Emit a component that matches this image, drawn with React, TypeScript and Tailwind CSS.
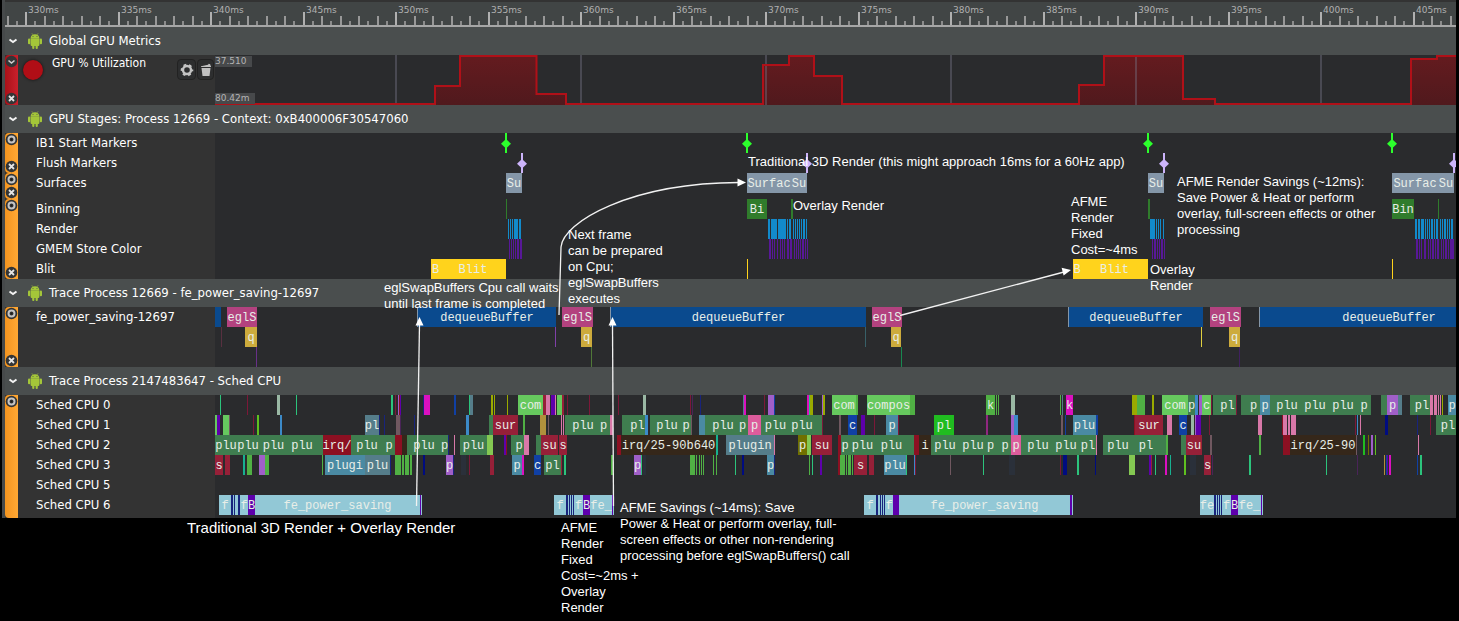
import React from "react";

/** [x, width, colour, label?] — x is measured from the left edge of the window. */
type Bar = [number, number, string, string?];

const TIMELINE_X = 215;

const PLUGIN = "#3f7d4f";
const LIGHT = "#66c95e";
const GREEN = "#50b044";
const VIVID = "#20bc20";
const LIME = "#60c020";
const MOSS = "#84c852";
const CRIMSON = "#962038";
const DARKRED = "#8c1022";
const WINE = "#7c1838";
const BROWN = "#35271a";
const TEAL = "#4a8aa3";
const SLATE = "#557d8a";
const VIOLET = "#5e00ac";
const DIMVIOLET = "#4a2458";
const PURPLE = "#a05fc8";
const PINK = "#d878a8";
const HOTPINK = "#dc5c9c";
const MAGENTA = "#dc10c0";
const NAVY = "#18247c";
const DEEP = "#000c80";
const ICE = "#92c8d6";
const BLUE = "#1040a4";
const OLIVE = "#9aaa00";
const SAGE = "#9ab8a4";
const EMERALD = "#2cc47c";
const JADE = "#18b090";
const AZURE = "#3c8ac8";
const SHADE = "#2a303a";
const GOLD = "#b0903c";
const MAUVE = "#705860";

const SURFACE = "#8496a8";
const BINNING = "#307c2c";
const RENDER = "#128acb";
const STORE = "#581898";
const BLIT = "#ffd31c";
const DEQUEUE = "#0a4a8e";
const SWAP = "#b3427f";
const QUEUE = "#cdab3c";

const line = (xs: number[], color: string): Bar[] => xs.map((x) => [x, 1, color] as Bar);
const wide = (xs: number[], color: string): Bar[] => xs.map((x) => [x, 2, color] as Bar);

const surfaces: Bar[] = [
  [506, 16, SURFACE, "Su"], [747, 44, SURFACE, "Surfac"], [791, 16, SURFACE, "Su"],
  [1148, 16, SURFACE, "Su"], [1392, 46, SURFACE, "Surfac"], [1438, 16, SURFACE, "Su"],
];

const binning: Bar[] = [
  [506, 1, BINNING], [747, 20, BINNING, "Bi"], [791, 2, BINNING],
  [1148, 2, BINNING], [1392, 22, BINNING, "Bin"], [1438, 1, BINNING],
];

const render: Bar[] = [
  ...line([508, 510, 512, 787, 793, 795, 797, 799, 801, 806, 1156, 1158, 1160, 1163, 1425, 1427, 1429, 1434, 1440, 1442, 1447, 1449], RENDER),
  ...wide([519, 768, 789, 803, 1415, 1418, 1431, 1436, 1444, 1451], RENDER),
  [514, 4, RENDER], [771, 6, RENDER], [778, 8, RENDER], [1150, 5, RENDER], [1421, 3, RENDER],
];

const store: Bar[] = [
  ...line([509, 511, 513, 515, 772, 774, 777, 780, 782, 784, 794, 796, 798, 800, 805, 807, 1152, 1157, 1159, 1164, 1419, 1421, 1428, 1430, 1435, 1441, 1443, 1448], STORE),
  ...wide([517, 520, 769, 787, 790, 802, 1154, 1161, 1416, 1424, 1432, 1437, 1445, 1450, 1452], STORE),
];

const blit: Bar[] = [
  [431, 9, BLIT, "B"], [440, 66, BLIT, "Blit"], [747, 1, BLIT],
  [1073, 8, BLIT, "B"], [1081, 67, BLIT, "Blit"], [1392, 1, BLIT],
];

const traceCalls: Bar[] = [
  [215, 6, DEQUEUE], [227, 30, SWAP, "eglS"],
  [417, 1, SURFACE], [418, 138, DEQUEUE, "dequeueBuffer"], [562, 31, SWAP, "eglS"],
  [610, 1, SURFACE], [611, 255, DEQUEUE, "dequeueBuffer"], [872, 30, SWAP, "eglS"],
  [1068, 1, SURFACE], [1069, 134, DEQUEUE, "dequeueBuffer"], [1210, 31, SWAP, "eglS"],
  [1259, 1, SURFACE], [1260, 258, DEQUEUE, "dequeueBuffer"],
];

const traceInner: Bar[] = [
  [221, 1, "#583040"], [245, 12, QUEUE, "q"], [555, 1, "#8040a8"], [581, 11, QUEUE, "q"],
  [865, 1, "#386068"], [891, 10, QUEUE, "q"], [1201, 1, "#e0d040"], [1229, 11, QUEUE, "q"],
];

const traceDeep: Bar[] = [
  [256, 1, "#683088"], [591, 1, "#507838"], [901, 1, "#188850"], [1239, 1, "#402060"],
];

const cpu0: Bar[] = [
  ...line([220, 296, 469, 809], EMERALD),
  ...line([247, 395, 567, 589, 618, 690, 764, 1211, 1236], WINE),
  [277, 3, SAGE], [391, 2, EMERALD], [398, 1, PURPLE], [399, 1, DARKRED], [400, 1, VIOLET],
  [423, 1, NAVY], [424, 6, MAGENTA], [454, 2, BLUE], [470, 3, SLATE],
  [491, 2, OLIVE], [494, 1, OLIVE], [507, 1, OLIVE],
  [518, 25, LIGHT, "com"], [543, 3, CRIMSON], [546, 4, PINK], [551, 4, VIOLET], [555, 1, PINK],
  [557, 5, LIGHT], [562, 2, CRIMSON], [643, 3, SAGE], [692, 1, DIMVIOLET], [700, 1, NAVY],
  [743, 1, SLATE], [744, 2, MAGENTA], [768, 6, PURPLE], [774, 1, BLUE],
  [807, 2, MAGENTA], [810, 3, OLIVE], [822, 1, PURPLE], [823, 2, OLIVE],
  [832, 24, LIGHT, "com"], [856, 2, GREEN], [867, 43, LIGHT, "compos"], [910, 5, GREEN],
  [986, 9, GREEN, "k"], [996, 1, GREEN], [998, 1, GREEN], [1011, 4, SAGE],
  [1060, 1, GREEN], [1062, 1, SLATE], [1066, 7, MAGENTA, "k"],
  [1132, 5, OLIVE], [1137, 8, GREEN], [1152, 2, OLIVE], [1162, 26, LIGHT, "com"],
  [1188, 7, PLUGIN, "p"], [1195, 3, AZURE], [1199, 3, PURPLE], [1202, 9, LIGHT, "c"],
  [1213, 6, PLUGIN], [1219, 17, PLUGIN, "pl"], [1241, 6, PLUGIN], [1247, 13, PLUGIN, "p"],
  [1260, 10, TEAL, "p"], [1270, 3, PLUGIN], [1273, 28, PLUGIN, "plu"], [1301, 28, PLUGIN, "plu"],
  [1329, 28, PLUGIN, "plu"], [1357, 14, PLUGIN, "p"], [1381, 6, PLUGIN], [1387, 11, PURPLE, "p"],
  [1398, 4, SLATE], [1410, 4, PLUGIN], [1414, 16, PLUGIN, "pl"], [1430, 3, PINK], [1434, 3, PINK],
  [1438, 1, PINK], [1440, 1, PINK], [1442, 1, OLIVE], [1448, 8, TEAL, "p"],
];

const cpu1: Bar[] = [
  ...line([253, 874, 898, 822, 1209, 1355, 1430], WINE),
  ...line([379, 384, 414, 1417], NAVY),
  [215, 2, LIGHT], [217, 3, VIOLET], [223, 6, LIGHT], [229, 1, MAUVE], [257, 2, LIME], [280, 2, AZURE],
  [365, 14, SLATE, "pl"], [396, 4, MAUVE], [400, 1, DIMVIOLET], [466, 3, AZURE],
  [489, 4, PLUGIN], [493, 25, CRIMSON, "sur"], [523, 2, GREEN], [540, 6, GOLD], [548, 1, MAUVE],
  [561, 1, PINK], [563, 1, PINK], [565, 4, PLUGIN], [569, 28, PLUGIN, "plu"], [597, 13, PLUGIN, "p"],
  [610, 3, PINK], [622, 8, PLUGIN], [630, 15, PLUGIN, "pl"], [645, 3, AZURE],
  [650, 3, PLUGIN], [653, 28, PLUGIN, "plu"], [681, 10, PLUGIN, "p"], [691, 1, MAUVE],
  [699, 6, TEAL], [705, 4, PLUGIN], [709, 28, PLUGIN, "plu"], [737, 11, PLUGIN, "p"],
  [748, 13, HOTPINK, "p"], [761, 29, PLUGIN, "plu"], [790, 24, PLUGIN, "plu"], [814, 8, PLUGIN],
  [839, 2, MAUVE], [848, 9, BLUE, "c"], [861, 4, VIOLET], [886, 12, TEAL, "p"], [934, 20, VIVID, "pl"],
  [986, 2, "#902880"], [1011, 3, PURPLE], [1014, 4, AZURE], [1061, 2, MAUVE], [1065, 1, BLUE],
  [1073, 23, TEAL, "plu"], [1096, 2, BLUE], [1134, 1, DARKRED], [1135, 28, CRIMSON, "sur"],
  [1167, 5, PINK], [1179, 8, BLUE, "c"], [1191, 3, SAGE], [1195, 1, PURPLE], [1196, 5, VIOLET],
  [1258, 4, PINK], [1282, 1, DARKRED], [1283, 4, PINK], [1288, 2, PINK], [1291, 5, PINK],
  [1357, 1, AZURE], [1360, 1, PINK], [1385, 3, DEEP], [1436, 4, PLUGIN], [1440, 16, PLUGIN, "pl"],
];

const cpu2: Bar[] = [
  [215, 22, PLUGIN, "plu"], [237, 22, PLUGIN, "plu"], [259, 29, PLUGIN, "plu"], [288, 28, PLUGIN, "plu"],
  [316, 7, PLUGIN], [323, 28, DARKRED, "irq/"], [351, 32, PLUGIN, "plu"], [383, 12, PLUGIN, "p"],
  [395, 7, DARKRED], [402, 5, BROWN], [407, 34, PLUGIN, "plu"], [441, 7, PLUGIN, "p"], [448, 1, NAVY],
  [454, 1, PINK], [460, 27, PLUGIN, "plu"], [487, 6, MOSS], [504, 2, VIOLET], [506, 1, DARKRED],
  [511, 3, PLUGIN], [514, 10, PLUGIN, "p"], [524, 5, PINK], [536, 5, PLUGIN], [541, 17, CRIMSON, "su"],
  [559, 8, CRIMSON, "s"], [617, 4, DARKRED], [621, 95, BROWN, "irq/25-90b640"], [716, 2, JADE],
  [726, 48, SLATE, "plugin"], [774, 1, PINK], [798, 9, "#707000", "p"], [807, 4, MOSS],
  [812, 20, CRIMSON, "su"], [838, 3, DARKRED], [841, 8, PLUGIN, "p"], [849, 27, PLUGIN, "plu"],
  [876, 31, PLUGIN, "plu"], [907, 7, PLUGIN], [914, 5, DARKRED], [919, 12, BROWN, "i"],
  [931, 28, PLUGIN, "plu"], [959, 28, PLUGIN, "plu"], [987, 7, PLUGIN, "p"], [994, 5, PLUGIN],
  [999, 12, PLUGIN, "p"], [1011, 10, HOTPINK, "p"], [1021, 3, PLUGIN], [1024, 28, PLUGIN, "plu"],
  [1052, 28, PLUGIN, "plu"], [1080, 16, PLUGIN, "pl"], [1096, 1, PINK], [1103, 30, PLUGIN, "plu"],
  [1133, 26, PLUGIN, "pl"], [1159, 7, PLUGIN], [1166, 2, GREEN], [1181, 5, PLUGIN],
  [1186, 16, CRIMSON, "su"], [1210, 2, MAUVE], [1259, 2, GREEN], [1283, 7, DARKRED],
  [1290, 66, BROWN, "irq/25-90"], [1356, 1, MAUVE], [1363, 2, VIVID], [1368, 1, "#707000"],
  [1371, 2, PURPLE], [1375, 1, LIME], [1418, 1, PINK],
];

const cpu3: Bar[] = [
  ...line([322, 696, 699, 701, 703, 713, 716, 809, 846, 852], GREEN),
  ...line([641, 735, 812, 906, 983, 1155, 1326], EMERALD),
  [215, 8, CRIMSON, "s"], [225, 5, CRIMSON], [243, 2, JADE], [247, 5, GREEN], [259, 6, PURPLE],
  [265, 4, GREEN], [325, 40, TEAL, "plugi"], [365, 25, SLATE, "plu"], [390, 1, NAVY],
  [395, 6, GREEN], [402, 2, GREEN], [405, 4, GREEN], [410, 2, GREEN], [423, 2, DEEP],
  [446, 7, PURPLE, "p"], [453, 1, NAVY], [461, 5, SHADE], [469, 1, WINE], [490, 4, CRIMSON],
  [512, 10, TEAL, "p"], [522, 2, MAGENTA], [534, 7, BLUE, "c"], [544, 17, PLUGIN, "pl"],
  [561, 1, CRIMSON], [564, 2, EMERALD], [611, 2, GREEN], [634, 7, PURPLE, "p"], [643, 3, SHADE],
  [690, 5, GREEN], [742, 2, DEEP], [767, 7, TEAL, "p"], [774, 1, NAVY], [820, 2, VIOLET],
  [838, 2, DARKRED], [840, 5, GREEN], [848, 3, GREEN], [854, 13, CRIMSON, "s"], [869, 5, CRIMSON],
  [884, 22, TEAL, "plu"], [914, 1, AZURE], [915, 1, WINE], [950, 1, MAUVE], [1009, 6, SHADE],
  [1060, 1, WINE], [1063, 4, DEEP], [1077, 2, EMERALD], [1095, 1, DEEP], [1129, 6, MOSS],
  [1149, 2, VIOLET], [1151, 1, CRIMSON], [1165, 2, MAGENTA], [1170, 1, JADE], [1184, 2, LIME],
  [1190, 6, SHADE], [1204, 7, CRIMSON, "s"], [1212, 1, DIMVIOLET], [1249, 2, EMERALD],
  [1357, 1, DIMVIOLET], [1384, 1, GOLD], [1386, 1, BLUE], [1387, 1, VIOLET], [1389, 2, MAGENTA],
  [1417, 1, BLUE], [1420, 2, EMERALD],
];

const cpu6: Bar[] = [
  [219, 12, ICE, "f"], [231, 9, ICE], [231, 2, NAVY], [234, 1, NAVY], [238, 2, NAVY],
  [240, 8, ICE, "f"], [248, 7, VIOLET, "B"], [255, 165, ICE, "fe_power_saving"], [420, 1, VIOLET], [421, 1, ICE],
  [554, 12, ICE, "f"], [566, 8, ICE], [566, 2, NAVY], ...line([569, 571, 573], NAVY),
  [574, 9, ICE, "f"], [583, 7, VIOLET, "B"], [590, 22, ICE, "fe_"], [612, 1, VIOLET], [613, 1, ICE],
  [864, 12, ICE, "f"], [876, 9, ICE], [876, 2, NAVY], ...line([880, 882, 884], NAVY),
  [885, 8, ICE, "f"], [893, 6, VIOLET], [899, 171, ICE, "fe_power_saving"], [1070, 2, VIOLET], [1072, 1, ICE],
  [1200, 14, ICE, "fe"], [1214, 8, ICE], [1214, 2, NAVY], ...line([1217, 1219, 1221], NAVY),
  [1222, 9, ICE, "f"], [1231, 7, VIOLET, "B"], [1238, 23, ICE, "fe_"], [1261, 1, VIOLET], [1262, 1, ICE],
];

function Track({ bars }: { bars: Bar[] }) {
  return (
    <div className="relative h-5">
      {bars.map(([x, w, color, label], i) => (
        <div
          key={i}
          className="absolute inset-y-0 flex justify-center overflow-hidden whitespace-nowrap font-['Liberation_Mono',monospace] text-xs leading-[22px] text-[#e8eee8]"
          style={{ left: x - TIMELINE_X, width: w, backgroundColor: color }}
        >
          {label}
        </div>
      ))}
    </div>
  );
}

function Markers({ xs, color }: { xs: number[]; color: string }) {
  return (
    <div className="relative h-5">
      {xs.map((x) => (
        <svg
          key={x}
          className="absolute top-0 h-5 w-3"
          style={{ left: x - TIMELINE_X - 6 }}
          viewBox="0 0 12 20"
          fill={color}
        >
          <path d="M5 0h2v20H5z" />
          <path d="M6 6l5 4.700-5 4.700-5-4.700z" />
        </svg>
      ))}
    </div>
  );
}

function StripIcon({ kind }: { kind: "ring" | "close" | "chevron" }) {
  const name = { ring: "Pin track", close: "Remove track", chevron: "Collapse track" }[kind];
  return (
    <button type="button" aria-label={name} className="block size-[13px]">
      <svg viewBox="0 0 13 13" className="size-[13px]">
        <circle cx="6.500" cy="6.500" r="5.800" fill="#333536" />
        {kind === "ring" && <circle cx="6.500" cy="6.500" r="3" fill="none" stroke="#c4c4c4" strokeWidth="2" />}
        {kind === "ring" && <circle cx="6.500" cy="6.500" r="1" fill="#1c1c1c" />}
        {kind === "close" && <path d="M4 4l5 5M9 4l-5 5" stroke="#e4e4e4" strokeWidth="1.800" />}
        {kind === "chevron" && <path d="M3.500 5.500l3 2.500 3-2.500" fill="none" stroke="#d0d0d0" strokeWidth="1.600" />}
      </svg>
    </button>
  );
}

function Strip({ tone = "orange", className = "", chevron = false, open = false }: { tone?: "orange" | "red"; className?: string; chevron?: boolean; open?: boolean }) {
  const fill = tone === "red" ? "bg-linear-to-r from-[#aa1018] to-[#c8202c]" : "bg-linear-to-r from-[#f5951f] to-[#ffa834]";
  return (
    <div className={`flex w-[13px] flex-col justify-between rounded-l-sm ${fill} ${className}`}>
      <StripIcon kind={chevron ? "chevron" : "ring"} />
      {!open && <StripIcon kind="close" />}
    </div>
  );
}

function Robot() {
  return (
    <svg viewBox="0 0 14 16" className="ml-[5px] h-4 w-3.5" fill="#a4c639" aria-hidden="true">
      <path d="M3.900.3l1 1.500M10.100.3l-1 1.500" stroke="#a4c639" strokeWidth=".6" />
      <path d="M2.600 5.200C2.700 2.800 4.500 1.300 7 1.300s4.300 1.500 4.400 3.900z" />
      <path d="M2.600 5.300h8.800v6.600a1 1 0 0 1-1 1H3.600a1 1 0 0 1-1-1z" />
      <rect x="0" y="5.400" width="2.300" height="5.900" rx="1.100" />
      <rect x="11.700" y="5.400" width="2.300" height="5.900" rx="1.100" />
      <rect x="4.200" y="11" width="2.200" height="4.900" rx="1" />
      <rect x="7.600" y="11" width="2.200" height="4.900" rx="1" />
      <circle cx="5" cy="3.500" r=".5" fill="#4a4e4e" />
      <circle cx="9" cy="3.500" r=".5" fill="#4a4e4e" />
    </svg>
  );
}

function GroupHeader({ title }: { title: string }) {
  return (
    <header className="flex h-7 items-center bg-[#4a4e4e]">
      <button type="button" aria-label={`Collapse ${title}`} className="ml-0.5 mr-1 flex size-3 items-center justify-center">
        <svg viewBox="0 0 10 8" className="h-2 w-2.5" fill="none" stroke="#f2f2f2" strokeWidth="2">
          <path d="M1.500 2.500L5 5l3.500-2.500" />
        </svg>
      </button>
      <Robot />
      <h2 className="ml-[7px] text-[13px] leading-5 text-white">{title}</h2>
    </header>
  );
}

function Labels({ names }: { names: string[] }) {
  return (
    <ul className="text-[13px] leading-5 text-white">
      {names.map((n) => (
        <li key={n} className="h-5 pl-[18px]">
          {n}
        </li>
      ))}
    </ul>
  );
}

function Group({ strips, labels, children }: { strips: React.ReactNode; labels: React.ReactNode; children: React.ReactNode }) {
  return (
    <div className="flex bg-[#2a2b2d]">
      <div className="flex w-[13px] shrink-0 flex-col bg-[#333]">{strips}</div>
      <div className="w-[197px] shrink-0 bg-[#333]">{labels}</div>
      <div className="relative min-w-0 flex-1 overflow-hidden">{children}</div>
    </div>
  );
}

const MAJOR_X = 26;
const MAJOR_STEP = 92.5;
const TICKS = Array.from({ length: 157 }, (_, i) => i - 2);

function Ruler() {
  return (
    <div className="relative h-[27px] overflow-hidden border-t-2 border-[#333] bg-[#414545]">
      {TICKS.map((n) => {
        const x = Math.round(MAJOR_X + (n * MAJOR_STEP) / 10) - 6;
        const major = n % 10 === 0;
        const size = major ? "h-[13px] bg-[#b0b0b0]" : n % 2 === 0 ? "h-[9px] bg-[#989898]" : "h-1 bg-[#8c8c8c]";
        return (
          <React.Fragment key={n}>
            <span className={`absolute bottom-0.5 w-0.5 ${size}`} style={{ left: x }} />
            {major && (
              <span
                className="absolute top-0.5 font-['DejaVu_Sans',sans-serif] text-[9px] leading-3 text-[#b0b0b0]"
                style={{ left: x + 3 }}
              >
                {330 + n / 2}ms
              </span>
            )}
          </React.Fragment>
        );
      })}
      <div className="absolute inset-x-0 bottom-0 h-0.5 bg-[#a6a6a6]" />
    </div>
  );
}

const GRID_X = [396, 581, 766, 951, 1136, 1321];
const CURVE =
  "M0 49H220V31H245V1H321.500V39H351V49H548V10H574V1H599V21H627V49H864V30H889V1H968V44H1000V49H1196V4H1222V1H1260";

function UtilizationChart() {
  return (
    <>
      <svg className="absolute left-0 top-0 h-[50px] w-[1241px]" role="img" aria-label="GPU % Utilization" viewBox="0 0 1241 50">
        <defs>
          <linearGradient id="load" x1="0" y1="0" x2="0" y2="1">
            <stop offset="0" stopColor="#641b1f" />
            <stop offset="1" stopColor="#50191d" />
          </linearGradient>
        </defs>
        <path d={`${CURVE}V50H0Z`} fill="url(#load)" />
        {GRID_X.map((x) => (
          <path key={x} d={`M${x - TIMELINE_X} 0V50`} stroke="#77778a" strokeOpacity="0.4" strokeWidth="2" />
        ))}
        <path d={CURVE} fill="none" stroke="#b01018" strokeWidth="2" />
      </svg>
      <span className="absolute left-0 top-px h-[11px] w-[37px] bg-[#47494b] font-['DejaVu_Sans',sans-serif] text-[9px] leading-[11px] text-[#b4b4b4]">37.510</span>
      <span className="absolute bottom-px left-0 h-[11px] w-10 bg-[#47494b] font-['DejaVu_Sans',sans-serif] text-[9px] leading-[11px] text-[#b4b4b4]">80.42m</span>
    </>
  );
}

function MetricLabel() {
  return (
    <div className="flex h-[50px] items-start pl-[5px] pr-px">
      <span className="mt-[5px] size-5 rounded-full bg-[#b00e16] shadow-[0_0_3px_#111]" />
      <span className="ml-[9px] flex-1 whitespace-nowrap text-xs leading-4 text-white">GPU % Utilization</span>
      <button type="button" aria-label="Metric settings" className="mt-1 flex h-[21px] w-[19px] items-center justify-center rounded border border-[#222] bg-[#2d2e2f]">
        <svg viewBox="0 0 14 14" className="size-3.5">
          <circle cx="7" cy="7" r="4" fill="none" stroke="#c4c4c4" strokeWidth="2.400" />
          <circle cx="7" cy="7" r="5.400" fill="none" stroke="#c4c4c4" strokeWidth="1.800" strokeDasharray="2.800 2.855" strokeDashoffset="1.400" />
        </svg>
      </button>
      <button type="button" aria-label="Delete metric" className="ml-px mt-1 flex h-[21px] w-[17px] items-center justify-center rounded border border-[#222] bg-[#2d2e2f]">
        <svg viewBox="0 0 12 14" className="h-3.5 w-3" fill="#c0c0c0">
          <path d="M1 3.200l7-1.400.8-1 1.400.4.2 1.200L11 3v1H1zM1.500 5h9l-1 8h-7z" />
        </svg>
      </button>
    </div>
  );
}

function Note({ className, lines }: { className: string; lines: string[] }) {
  return (
    <p className={`absolute whitespace-nowrap font-['Liberation_Sans',Arial,sans-serif] leading-4 text-white ${className}`}>
      {lines.map((l) => (
        <span key={l} className="block">
          {l}
        </span>
      ))}
    </p>
  );
}

function Annotations() {
  return (
    <div className="pointer-events-none absolute inset-0">
      <svg className="absolute left-0 top-0 h-[621px] w-[1459px]" viewBox="0 0 1459 621" fill="none" stroke="#f2f2f2" strokeWidth="1.300" aria-hidden="true">
        <path d="M416.500 506L419.500 324" />
        <path d="M613.500 506L612.500 324" />
        <path d="M559 315L561 247C563 222 630 183 739 182.500" />
        <path d="M900 315.500L1064 272" />
        <g fill="#fff" stroke="none">
          <path d="M419.500 317l4 8.500h-8z" />
          <path d="M612.500 317l4 8.500h-8z" />
          <path d="M746 182.500l-8.500 4v-8z" />
          <path d="M1071 270l-7.400 5.400-2-7.600z" />
        </g>
      </svg>
      <Note className="left-[748px] top-[154px] text-[13px]" lines={["Traditional 3D Render (this might approach 16ms for a 60Hz app)"]} />
      <Note className="left-[793px] top-[198px] text-[13px]" lines={["Overlay Render"]} />
      <Note className="left-[568px] top-[227px] text-[13px]" lines={["Next frame", "can be prepared", "on Cpu;", "eglSwapBuffers", "executes"]} />
      <Note className="left-[384px] top-[280px] text-[13px]" lines={["eglSwapBuffers Cpu call waits", "until last frame is completed"]} />
      <Note className="left-[1071px] top-[194px] text-[13px]" lines={["AFME", "Render", "Fixed", "Cost=~4ms"]} />
      <Note className="left-[1177px] top-[174px] text-[13px]" lines={["AFME Render Savings (~12ms):", "Save Power & Heat or perform", "overlay, full-screen effects or other", "processing"]} />
      <Note className="left-[1150px] top-[262px] text-[13px]" lines={["Overlay", "Render"]} />
      <Note className="left-[187px] top-[520px] text-[15px]" lines={["Traditional 3D Render + Overlay Render"]} />
      <Note className="left-[561px] top-[520px] text-[13px]" lines={["AFME", "Render", "Fixed", "Cost=~2ms +", "Overlay", "Render"]} />
      <Note className="left-[620px] top-[500px] text-[13px]" lines={["AFME Savings (~14ms): Save", "Power & Heat or perform overlay, full-", "screen effects or other non-rendering", "processing before eglSwapBuffers() call"]} />
    </div>
  );
}

export default function App() {
  return (
    <main className="relative min-h-screen overflow-hidden bg-black pl-0.5 pr-[3px] font-['DejaVu_Sans_Condensed','Noto_Sans',sans-serif]">
      <div className="border-l-[3px] border-[#46494a]">
        <Ruler />
        <section>
          <GroupHeader title="Global GPU Metrics" />
          <Group strips={<Strip tone="red" chevron className="h-[50px]" />} labels={<MetricLabel />}>
            <UtilizationChart />
          </Group>
        </section>
        <section>
          <GroupHeader title="GPU Stages: Process 12669 - Context: 0xB400006F30547060" />
          <Group
            strips={
              <>
                <Strip className="h-10" />
                <Strip className="h-[26px]" />
                <Strip className="h-20" />
              </>
            }
            labels={
              <div className="flex flex-col gap-1.5">
                <Labels names={["IB1 Start Markers", "Flush Markers", "Surfaces"]} />
                <Labels names={["Binning", "Render", "GMEM Store Color", "Blit"]} />
              </div>
            }
          >
            <div className="flex flex-col gap-1.5">
              <div>
                <Markers xs={[506, 747, 1148, 1392]} color="#2cff2c" />
                <Markers xs={[522, 807, 1164, 1454]} color="#ccb4fa" />
                <Track bars={surfaces} />
              </div>
              <div>
                <Track bars={binning} />
                <Track bars={render} />
                <Track bars={store} />
                <Track bars={blit} />
              </div>
            </div>
          </Group>
        </section>
        <section>
          <GroupHeader title="Trace Process 12669 - fe_power_saving-12697" />
          <Group strips={<Strip className="flex-1" />} labels={<Labels names={["fe_power_saving-12697"]} />}>
            <Track bars={traceCalls} />
            <Track bars={traceInner} />
            <Track bars={traceDeep} />
          </Group>
        </section>
        <section>
          <GroupHeader title="Trace Process 2147483647 - Sched CPU" />
          <Group
            strips={<Strip open className="flex-1" />}
            labels={<Labels names={["Sched CPU 0", "Sched CPU 1", "Sched CPU 2", "Sched CPU 3", "Sched CPU 5", "Sched CPU 6"]} />}
          >
            <div className="pb-[3px]">
              <Track bars={cpu0} />
              <Track bars={cpu1} />
              <Track bars={cpu2} />
              <Track bars={cpu3} />
              <Track bars={[]} />
              <Track bars={cpu6} />
            </div>
          </Group>
        </section>
      </div>
      <Annotations />
    </main>
  );
}
